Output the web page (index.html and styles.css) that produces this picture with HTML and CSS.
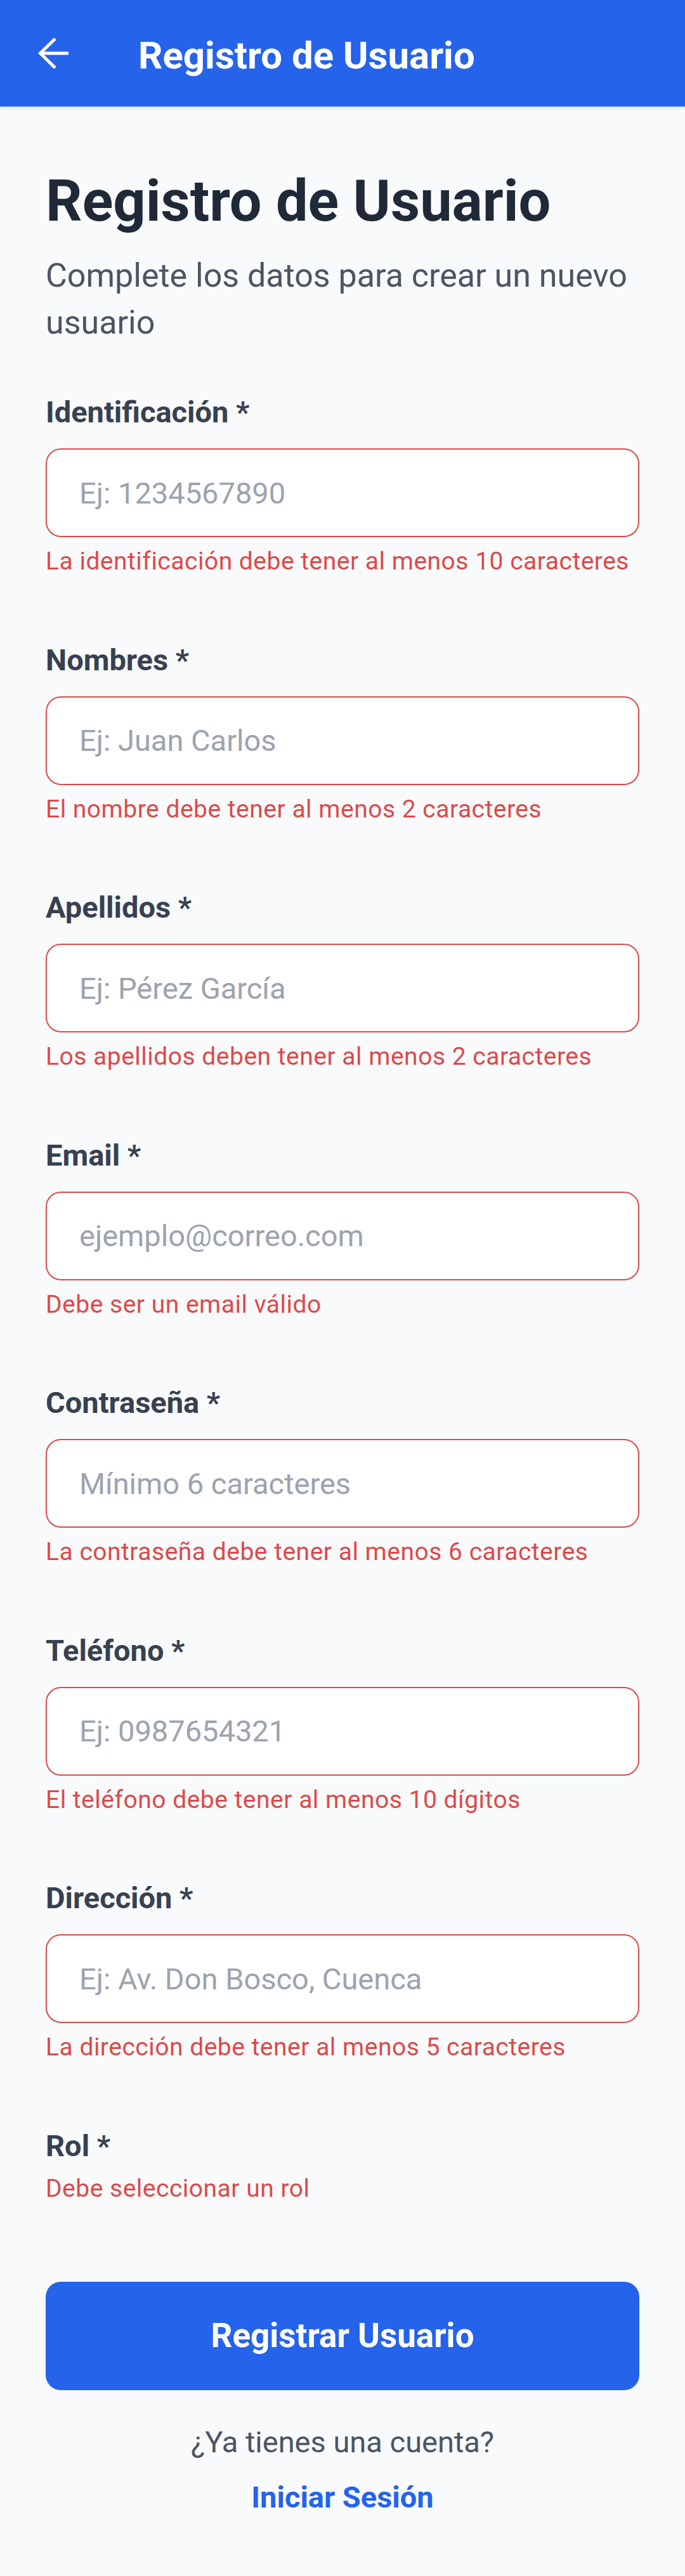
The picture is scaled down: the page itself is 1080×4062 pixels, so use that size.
FILE: index.html
```html
<!DOCTYPE html>
<html lang="es">
<head>
<meta charset="utf-8">
<title>Registro de Usuario</title>
<link rel="stylesheet" href="styles.css">
</head>
<body>
<header class="appbar">
  <button class="back" aria-label="Volver">
    <svg width="48" height="48" viewBox="0 0 48 48" fill="none" stroke="#ffffff" stroke-width="5" stroke-linecap="butt" stroke-linejoin="miter">
      <polyline points="27,1 3.5,24 27,47"/>
      <line x1="2" y1="24" x2="48" y2="24"/>
    </svg>
  </button>
  <h1 class="appbar-title">Registro de Usuario</h1>
</header>

<main class="content">
  <h2 class="heading">Registro de Usuario</h2>
  <p class="subtitle">Complete los datos para crear un nuevo usuario</p>

  <form class="form">
    <div class="field">
      <label class="label">Identificación *</label>
      <input class="input" type="text" placeholder="Ej: 1234567890">
      <p class="error">La identificación debe tener al menos 10 caracteres</p>
    </div>
    <div class="field">
      <label class="label">Nombres *</label>
      <input class="input" type="text" placeholder="Ej: Juan Carlos">
      <p class="error">El nombre debe tener al menos 2 caracteres</p>
    </div>
    <div class="field">
      <label class="label">Apellidos *</label>
      <input class="input" type="text" placeholder="Ej: Pérez García">
      <p class="error">Los apellidos deben tener al menos 2 caracteres</p>
    </div>
    <div class="field">
      <label class="label">Email *</label>
      <input class="input" type="text" placeholder="ejemplo@correo.com">
      <p class="error">Debe ser un email válido</p>
    </div>
    <div class="field">
      <label class="label">Contraseña *</label>
      <input class="input" type="text" placeholder="Mínimo 6 caracteres">
      <p class="error">La contraseña debe tener al menos 6 caracteres</p>
    </div>
    <div class="field">
      <label class="label">Teléfono *</label>
      <input class="input" type="text" placeholder="Ej: 0987654321">
      <p class="error">El teléfono debe tener al menos 10 dígitos</p>
    </div>
    <div class="field">
      <label class="label">Dirección *</label>
      <input class="input" type="text" placeholder="Ej: Av. Don Bosco, Cuenca">
      <p class="error">La dirección debe tener al menos 5 caracteres</p>
    </div>
    <div class="field field-rol">
      <label class="label">Rol *</label>
      <p class="error error-rol">Debe seleccionar un rol</p>
    </div>

    <button type="button" class="submit">Registrar Usuario</button>
  </form>

  <div class="footer">
    <p class="footer-q">¿Ya tienes una cuenta?</p>
    <a class="footer-link" href="#">Iniciar Sesión</a>
  </div>
</main>
</body>
</html>
```

FILE: styles.css
```css
* {
  box-sizing: border-box;
}

html, body {
  margin: 0;
  padding: 0;
}

body {
  background: #f9fafb;
  font-family: Roboto, "Noto Sans", "Liberation Sans", sans-serif;
  min-height: 4062px;
}

.appbar {
  height: 168px;
  background: #2563eb;
  display: flex;
  align-items: center;
  box-shadow: 0 2px 6px rgba(0, 0, 0, 0.12);
  position: relative;
}

.back {
  width: 48px;
  height: 48px;
  margin-left: 60px;
  padding: 0;
  border: 0;
  background: transparent;
  display: flex;
}

.appbar-title {
  margin: 0 0 0 110px;
  padding-top: 7px;
  color: #ffffff;
  font-size: 60px;
  line-height: 70px;
  font-weight: 700;
}

.content {
  padding: 94px 72px 0;
}

.heading {
  margin: 0;
  font-size: 90px;
  line-height: 112px;
  font-weight: 700;
  color: #1f2937;
}

.subtitle {
  margin: 24px 0 0;
  font-size: 52px;
  line-height: 74px;
  color: #4b5563;
}

.form {
  margin-top: 76px;
}

.field {
  margin-bottom: 106.5px;
}

.label {
  display: block;
  font-size: 47px;
  line-height: 56px;
  font-weight: 700;
  color: #374151;
}

.input {
  display: block;
  width: 100%;
  height: 140px;
  margin-top: 29px;
  padding: 0 0 0 51px;
  border: 2.5px solid #dc4a4a;
  border-radius: 24px;
  background: #ffffff;
  font-family: Roboto, "Noto Sans", "Liberation Sans", sans-serif;
  font-size: 47px;
  color: #1f2937;
  outline: none;
}

.input::placeholder {
  color: #9ca3af;
}

.error {
  margin: 17px 0 0;
  font-size: 39px;
  line-height: 42px;
  letter-spacing: 0.5px;
  color: #dc4a4a;
}

.field-rol {
  margin-bottom: 126px;
}

.error-rol {
  margin-top: 18px;
}

.submit {
  display: block;
  width: 100%;
  height: 171px;
  border: 0;
  border-radius: 24px;
  background: #2563eb;
  color: #ffffff;
  font-family: Roboto, "Noto Sans", "Liberation Sans", sans-serif;
  font-size: 53px;
  font-weight: 700;
}

.footer {
  margin-top: 54px;
  display: flex;
  flex-direction: column;
  align-items: center;
}

.footer-q {
  margin: 0;
  font-size: 47px;
  line-height: 56px;
  color: #4b5563;
}

.footer-link {
  margin-top: 31px;
  font-size: 47px;
  line-height: 56px;
  font-weight: 700;
  color: #2563eb;
  text-decoration: none;
}
```
